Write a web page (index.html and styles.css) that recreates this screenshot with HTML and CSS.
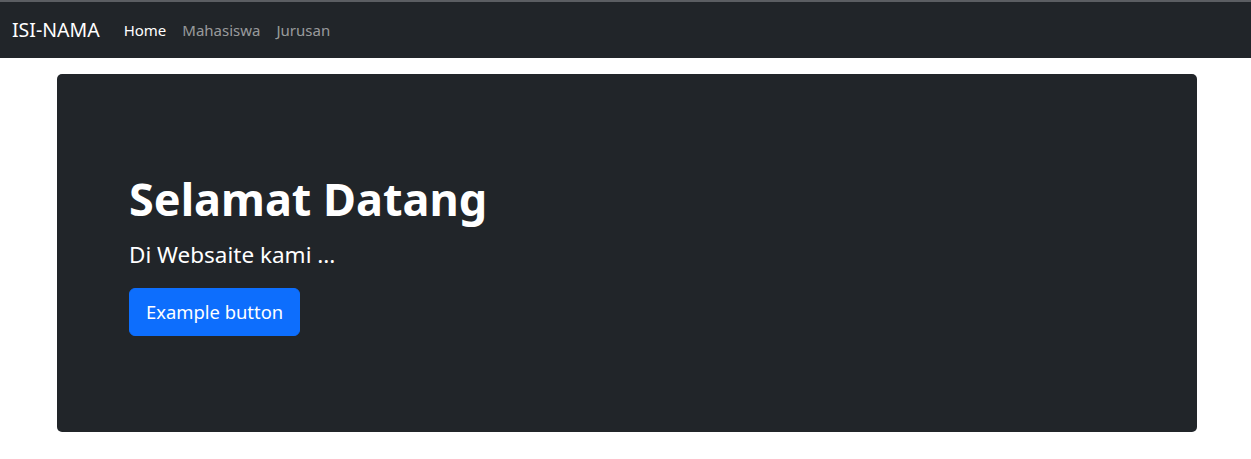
FILE: index.html
```html
<!DOCTYPE html>
<html lang="id">
<head>
<meta charset="utf-8">
<title>ISI-NAMA</title>
<link rel="stylesheet" href="styles.css">
</head>
<body>
<nav class="navbar">
  <a class="brand" href="#">ISI-NAMA</a>
  <ul class="nav">
    <li><a class="nav-link active" href="#">Home</a></li>
    <li><a class="nav-link" href="#">Mahasiswa</a></li>
    <li><a class="nav-link" href="#">Jurusan</a></li>
  </ul>
</nav>
<main class="page">
  <section class="hero">
    <h1 class="hero-title">Selamat Datang</h1>
    <p class="hero-text">Di Websaite kami ...</p>
    <button class="btn" type="button">Example button</button>
  </section>
</main>
</body>
</html>
```
FILE: styles.css
```css
* { box-sizing: border-box; }
html, body { margin: 0; padding: 0; }
body {
  font-family: "Noto Sans", "Open Sans", sans-serif;
  font-size: 16px;
  line-height: 1.5;
  color: #212529;
  background: #fff;
}
.navbar {
  display: flex;
  align-items: center;
  height: 58px;
  padding: 0 12px;
  background: #212529;
  border-top: 2px solid #5b5e62;
}
.brand {
  font-size: 19.5px;
  line-height: 30px;
  color: #fff;
  text-decoration: none;
  margin-right: 16px;
}
.nav {
  display: flex;
  list-style: none;
  margin: 0;
  padding: 0;
}
.nav-link {
  display: block;
  padding: 8px;
  font-size: 15px;
  line-height: 24px;
  color: rgba(255,255,255,0.55);
  text-decoration: none;
}
.nav-link.active { color: #fff; }
.page {
  padding: 16px 0 0 3px;
}
.hero {
  width: 1140px;
  margin: 0 auto;
  background: #212529;
  border-radius: 5px;
  padding: 96px 72px;
  color: #fff;
}
.hero-title {
  margin: 0 0 8px;
  font-size: 45px;
  line-height: 57.6px;
  font-weight: 700;
}
.hero-text {
  margin: 0 0 15px;
  font-size: 22.5px;
  line-height: 36px;
  padding-top: 1px;
}
.btn {
  font-family: inherit;
  font-size: 18.4px;
  line-height: 30px;
  padding: 8px 16px;
  color: #fff;
  background: #0d6efd;
  border: 1px solid #0d6efd;
  border-radius: 6px;
  cursor: pointer;
}
```
